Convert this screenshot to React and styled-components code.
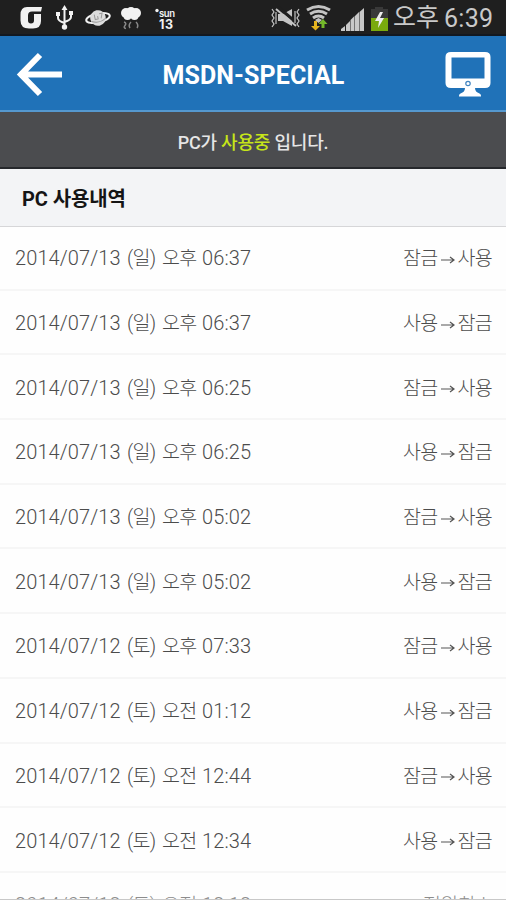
import React from 'react';
import styled, { createGlobalStyle } from 'styled-components';

const Global = createGlobalStyle`
  * { box-sizing: border-box; }
  body { margin: 0; background: #fefefe; font-family: Roboto, "Noto Sans CJK KR", sans-serif; }
`;

const Screen = styled.div`
  width: 506px; height: 900px; overflow: hidden;
  display: flex; flex-direction: column;
  border-bottom: 1px solid #c8c8c8;
`;

const StatusBar = styled.div`
  height: 36px; flex: none; background: #1f1f1f; border-bottom: 2px solid #121820;
  display: flex; justify-content: space-between;
  svg { display: block; }
`;

const Clock = styled.div`
  display: flex; color: #c9c9c9; font-size: 25px; line-height: 37px; white-space: pre;
  padding-right: 12px;
`;
const Meridiem = styled.span`width: 51px; font-size: 25px; line-height: 36px;`;
const Time = styled.span`width: 50px; letter-spacing: 0.3px;`;
const Indicators = styled.div`display: flex;`;

const Header = styled.header`
  height: 76px; flex: none; background: #2072b8; border-bottom: 2px solid #5598cf;
  display: grid; grid-template-columns: 80px 1fr 80px; align-items: center;
  svg { display: block; }
`;
const Title = styled.h1`
  margin: 0; padding: 5px 0 0 1px; text-align: center; color: #fff;
  font-size: 25px; line-height: 30px; font-weight: 700; letter-spacing: 0.1px;
`;

const Notice = styled.div`
  height: 57px; flex: none; background: #4b4c4f; border-bottom: 2px solid #26282c;
  display: flex; align-items: center; justify-content: center;
  color: #e6e6e6; font-size: 18px; font-weight: 500; letter-spacing: -0.2px; white-space: pre; padding-top: 2px;
`;
const Highlight = styled.span`color: #c6e619;`;

const Section = styled.h2`
  margin: 0; height: 58px; flex: none; padding: 0 22px 1px; background: #f3f4f6;
  border-bottom: 1px solid #d6d6d8; display: flex; align-items: center;
  color: #151515; font-size: 20px; font-weight: 700; letter-spacing: -0.1px;
`;

const List = styled.ul`
  margin: -1px 0 0; padding: 0; list-style: none; flex: 1; min-height: 0; overflow: hidden;
`;
const Row = styled.li`
  height: 64.7px; padding: 3px 14px 0 15px; border-bottom: 2px solid #f6f6f6;
  display: flex; align-items: center; justify-content: space-between;
  color: ${p => (p.$faded ? '#8c8c8c' : '#4c4c4c')};
  font-size: 20px; font-weight: 300; line-height: 28px; white-space: nowrap;
`;
const Stamp = styled.div`display: grid; grid-template-columns: 112px 35px 40px 50px; align-items: center;`;
const Change = styled.div`display: flex; align-items: center; gap: 3px; svg { display: block; }`;
const Word = styled.span`letter-spacing: -0.7px; font-size: 19.5px; padding-top: 1px;`;
const Digits = styled.span`letter-spacing: 0.1px; margin-top: -1px;`;

const StatusLeft = () => (
  <svg width="190" height="34" viewBox="0 0 190 34" fill="#f2f2f2" stroke="none">
    <path fillRule="evenodd" d="M27 7h15l-1 4.500h-9q-4 0-4 4v5q0 3 3 3t3-3V14h7v7q0 7.500-8 7.500h-4q-8.500 0-8.500-8V15q0-8 6.500-8z" />
    <g stroke="#f2f2f2" strokeWidth="2" fill="none">
      <path d="M64.500 9v18M58 13v5q0 3 6.500 5M71 13v4q0 3-6.500 5" />
    </g>
    <path d="m64.500 5-3 5h6zM56 12h4v4h-4zM69 11h4v4h-4z" /><circle cx="64.500" cy="27" r="2.700" />
    <g transform="rotate(-12 98 18)">
      <ellipse cx="98" cy="18" rx="12" ry="4.500" fill="none" stroke="#f2f2f2" strokeWidth="2" />
      <circle cx="98" cy="18" r="7.800" fill="#ddd" />
      <path d="M91 20q7 4 14 0M95 14v5h3v-3M100 14h3l-2 5" fill="none" stroke="#999" />
    </g>
    <circle cx="126" cy="13" r="5" /><circle cx="131" cy="12" r="5" /><circle cx="136" cy="13" r="5" /><circle cx="127.500" cy="16" r="4" /><circle cx="134.500" cy="16" r="4" />
    <path d="M124 22q3 1 1 3.500t1 3M131 22q-3 3-1 6M136 22q3 3 1 6" fill="none" stroke="#888" strokeWidth="1.500" />
    <circle cx="157" cy="10.500" r="1.700" />
    <text x="159" y="16.500" fontFamily="Inter" fontWeight="600" fontSize="9.500" textLength="16">sun</text>
    <text x="159" y="29" fontFamily="Inter" fontWeight="700" fontSize="12.500" textLength="14">13</text>
  </svg>
);

const StatusRight = () => (
  <svg width="124" height="34" viewBox="268 0 124 34" fill="none" stroke="#c4c4c4">
    <path d="M277 14h5l9-5v17l-9-5h-5z" fill="#c4c4c4" stroke="none" />
    <path d="m277 7 20 17" stroke="#1f1f1f" strokeWidth="3" /><path d="m275 9 20 17" strokeWidth="2" />
    <path d="m271 9 2 3-2 3 2 3-2 3 2 3-2 3M275 12v12M298 9l-2 3 2 3-2 3 2 3-2 3 2 3M294 11v12" strokeWidth="1.200" />
    <path d="M306 10q11.500-7 23 0M309 14q8.500-5.500 17 0M312 18q5.500-4 11 0" strokeWidth="3" />
    <path d="m314 20 3.500-2 3.500 2-3.500 3z" fill="#c4c4c4" stroke="none" />
    <path d="M313 21h3v5h3l-4.500 4.500L310 26h3z" fill="#e5b51f" stroke="none" />
    <path d="M320.500 28h3v-4h3l-4.500-5-4.500 5h3z" fill="#74b82a" stroke="none" />
    <g fill="#c8c8c8" stroke="none"><path d="M340 31v-2l4-3v5zM345 31v-6l4-4v10zM349.500 31V20l4-4v15zM354 31V16l4-4v19zM358.500 31V12l4.500-4v23z" /></g>
    <path d="M370 9h4V7h8v2h5v9h-17z" fill="#393939" stroke="none" />
    <path d="M370 18h17v13h-17z" fill="#7aaa0d" stroke="none" />
    <path d="m379 12-5 9h4l-1 7 6-10h-4l3-6z" fill="#eee" stroke="none" />
  </svg>
);

const Back = () => (
  <svg width="80" height="74" viewBox="0 0 80 74" fill="none" stroke="#fff" strokeWidth="6">
    <path d="M40 19 21 38.500 40 58M21 38.500h41" />
  </svg>
);
const Monitor = () => (
  <svg width="80" height="74" viewBox="0 0 80 74">
    <path fill="#fff" fillRule="evenodd" d="M25 16h34q5.500 0 5.500 5v26q0 5-5.500 5H49q0 4 4.500 5.500 2 .8 1.500 3H33q-.5-2.200 1.500-3Q39 56 39 52H25q-5.500 0-5.500-5V21q0-5 5.500-5zm.5 5.500v21h33v-21z" />
    <circle cx="42" cy="47.500" r="2.200" fill="none" stroke="#4084c0" strokeWidth="1.200" />
  </svg>
);
const Arrow = () => (
  <svg width="14" height="18" viewBox="0 0 14 18" fill="none" stroke="#555" strokeWidth="1.200">
    <path d="M0 10h12M9 7l4 3-4 3" />
  </svg>
);

const entries = [
  ['2014/07/13', '(일)', '오후', '06:37', '잠금', '사용'],
  ['2014/07/13', '(일)', '오후', '06:37', '사용', '잠금'],
  ['2014/07/13', '(일)', '오후', '06:25', '잠금', '사용'],
  ['2014/07/13', '(일)', '오후', '06:25', '사용', '잠금'],
  ['2014/07/13', '(일)', '오후', '05:02', '잠금', '사용'],
  ['2014/07/13', '(일)', '오후', '05:02', '사용', '잠금'],
  ['2014/07/12', '(토)', '오후', '07:33', '잠금', '사용'],
  ['2014/07/12', '(토)', '오전', '01:12', '사용', '잠금'],
  ['2014/07/12', '(토)', '오전', '12:44', '잠금', '사용'],
  ['2014/07/12', '(토)', '오전', '12:34', '사용', '잠금'],
  ['2014/07/12', '(토)', '오전', '12:12', '전원취소', null],
];

export default function App() {
  return (
    <Screen>
      <Global />
      <StatusBar>
        <StatusLeft />
        <Indicators>
          <StatusRight />
          <Clock><Meridiem>오후</Meridiem><Time>6:39</Time></Clock>
        </Indicators>
      </StatusBar>
      <Header><Back /><Title>MSDN-SPECIAL</Title><Monitor /></Header>
      <Notice>PC가 <Highlight>사용중</Highlight> 입니다.</Notice>
      <Section>PC 사용내역</Section>
      <List>
        {entries.map(([date, day, half, time, from, to], i) => (
          <Row key={i} $faded={!to}>
            <Stamp><Digits>{date}</Digits><Word>{day}</Word><Word>{half}</Word><Digits>{time}</Digits></Stamp>
            <Change><Word>{from}</Word>{to && <><Arrow /><Word>{to}</Word></>}</Change>
          </Row>
        ))}
      </List>
    </Screen>
  );
}
